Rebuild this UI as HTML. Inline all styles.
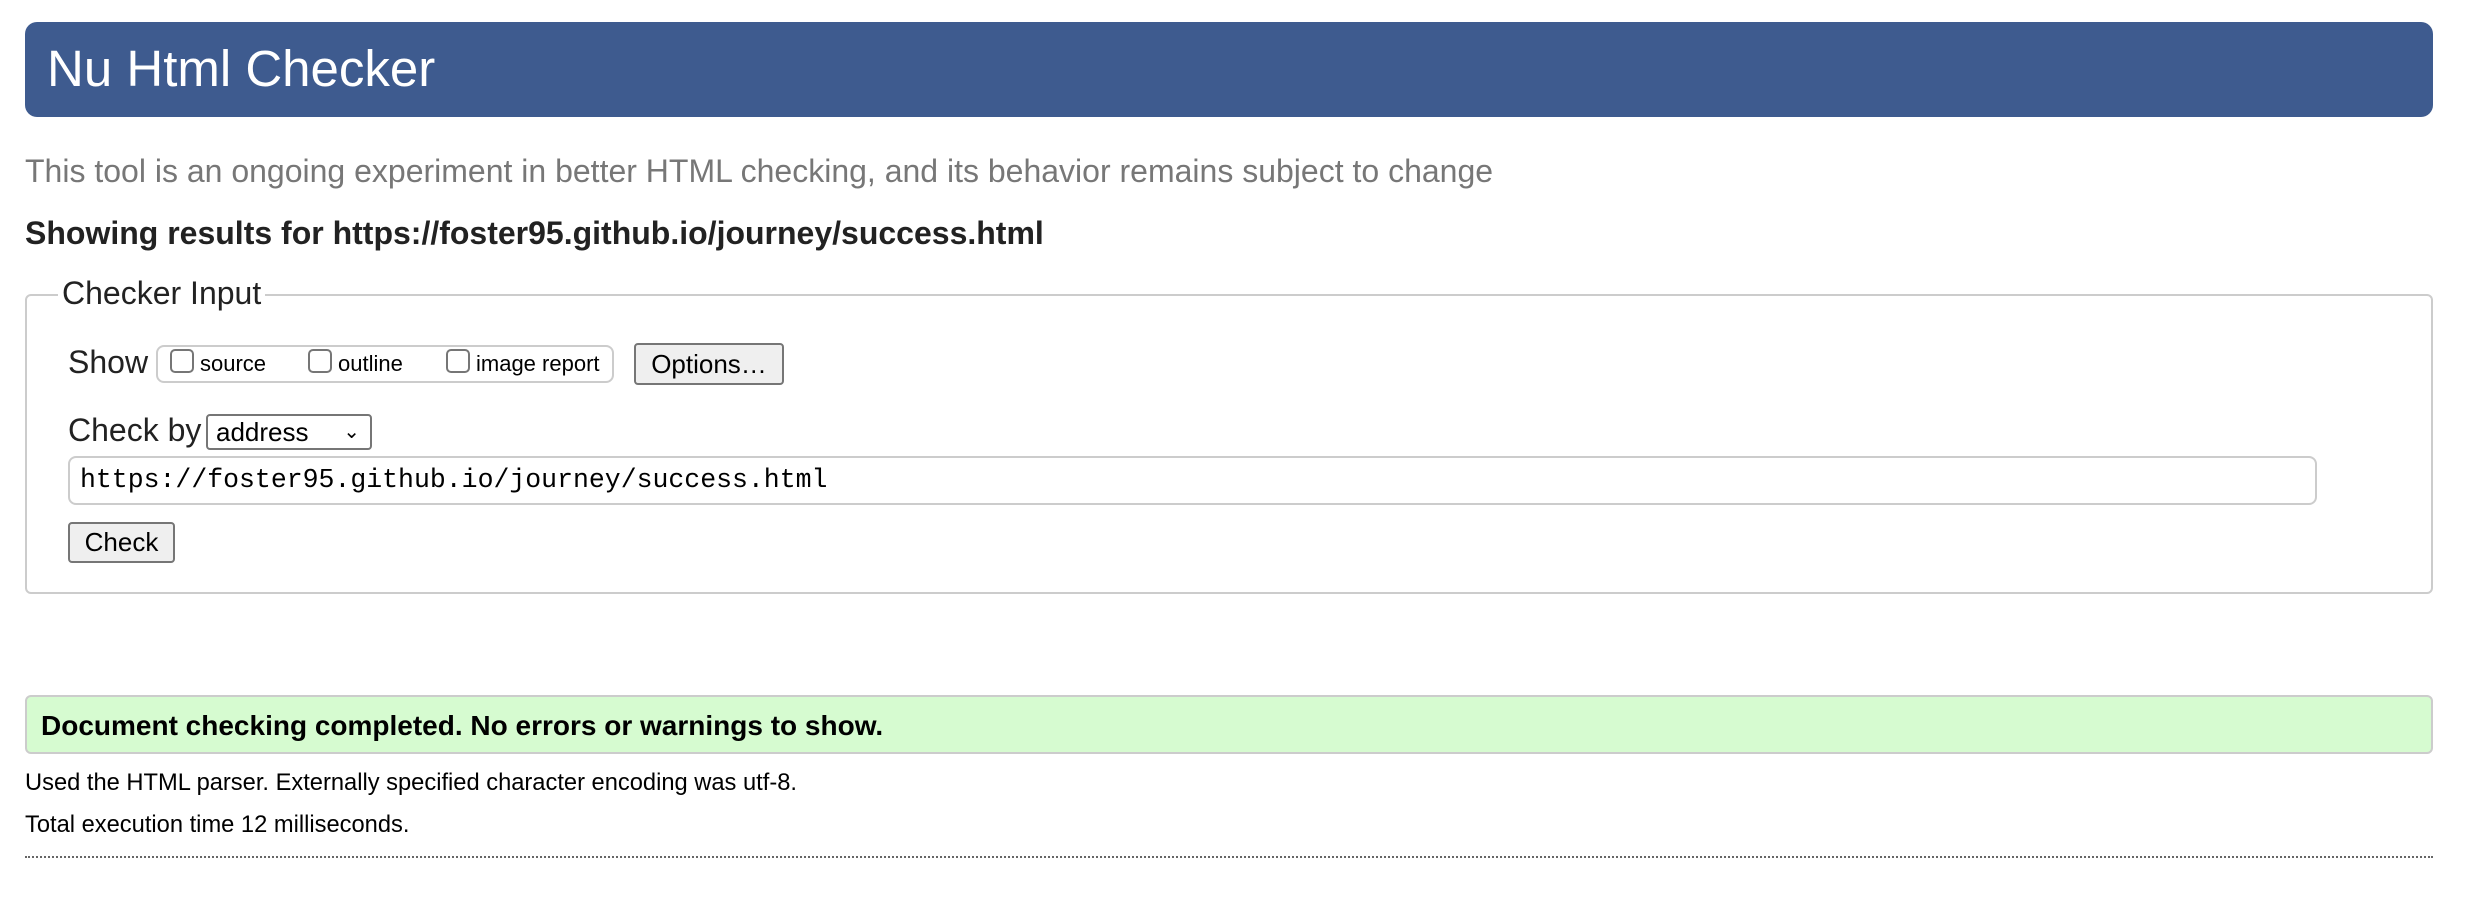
<!DOCTYPE html>
<html><head><meta charset="utf-8"><style>
*{box-sizing:border-box;margin:0;padding:0}
body{width:2468px;height:920px;background:#fff;font-family:"Liberation Sans",Arial,sans-serif;color:#000;position:relative;overflow:hidden}
.a{position:absolute;white-space:nowrap}
.hdr{left:25px;top:22px;width:2408px;height:95px;background:#3e5b8f;border-radius:12px}
.btn{position:absolute;background:#efefef;border:2px solid #767676;border-radius:4px;font-size:26px;text-align:center}
.cb{display:inline-block;width:24px;height:24px;border:2px solid #767676;border-radius:5px;vertical-align:-2px;margin-right:6px;background:#fff}
</style></head><body>
<div class="a hdr"></div>
<div class="a" style="left:47px;top:38px;font-size:51px;color:#fff;line-height:62px">Nu Html Checker</div>
<div class="a" style="left:25px;top:152px;font-size:32px;color:#777;line-height:38px">This tool is an ongoing experiment in better HTML checking, and its behavior remains subject to change</div>
<div class="a" style="left:25px;top:214px;font-size:32px;font-weight:bold;color:#222;line-height:38px">Showing results for https://foster95.github.io/journey/success.html</div>
<div class="a" style="left:25px;top:294px;width:2408px;height:300px;border:2px solid #ccc;border-radius:6px"></div>
<div class="a" style="left:58px;top:274px;font-size:32px;color:#222;background:#fff;padding:0 4px;line-height:38px">Checker Input</div>
<div class="a" style="left:68px;top:343px;font-size:32px;color:#222;line-height:38px">Show</div>
<div class="a" style="left:156px;top:345px;width:458px;height:38px;border:2px solid #ccc;border-radius:8px"></div>
<div class="a" style="left:170px;top:347px;font-size:22px;line-height:34px"><span class="cb"></span>source</div>
<div class="a" style="left:308px;top:347px;font-size:22px;line-height:34px"><span class="cb"></span>outline</div>
<div class="a" style="left:446px;top:347px;font-size:22px;line-height:34px"><span class="cb"></span>image report</div>
<div class="btn" style="left:634px;top:343px;width:150px;height:42px;line-height:38px">Options…</div>
<div class="a" style="left:68px;top:411px;font-size:32px;color:#222;line-height:38px">Check by</div>
<div class="a" style="left:206px;top:414px;width:166px;height:36px;border:2px solid #767676;border-radius:4px;font-size:26px;line-height:32px;padding-left:8px;background:#fff">address<span style="position:absolute;right:10px;top:0;font-size:20px">&#8964;</span></div>
<div class="a" style="left:68px;top:456px;width:2249px;height:49px;border:2px solid #ccc;border-radius:8px;font-family:'Liberation Mono',monospace;font-size:26.5px;line-height:45px;padding-left:10px">https://foster95.github.io/journey/success.html</div>
<div class="btn" style="left:68px;top:522px;width:107px;height:41px;line-height:37px">Check</div>
<div class="a" style="left:25px;top:695px;width:2408px;height:59px;background:#d6fbd0;border:2px solid #ccc;border-radius:6px"></div>
<div class="a" style="left:41px;top:709px;font-size:28px;font-weight:bold;line-height:34px">Document checking completed. No errors or warnings to show.</div>
<div class="a" style="left:25px;top:769px;font-size:23.7px;line-height:28px">Used the HTML parser. Externally specified character encoding was utf-8.</div>
<div class="a" style="left:25px;top:811px;font-size:23.7px;line-height:28px">Total execution time 12 milliseconds.</div>
<div class="a" style="left:25px;top:856px;width:2408px;border-top:2px dotted #666"></div>
</body></html>
